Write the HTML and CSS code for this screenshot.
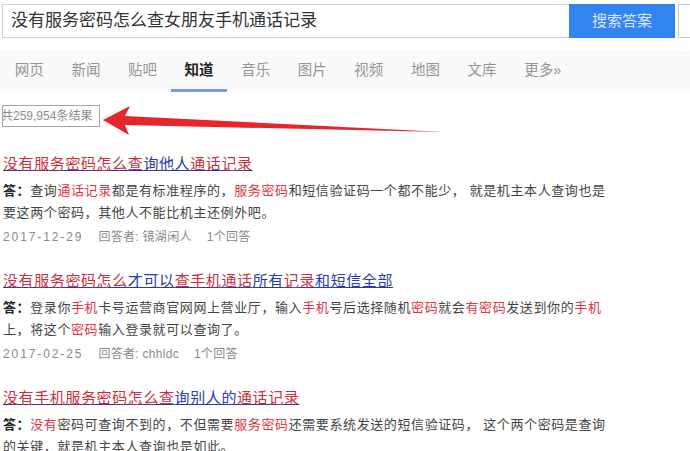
FILE: index.html
```html
<!DOCTYPE html>
<html lang="zh-CN">
<head>
  <meta charset="UTF-8">
  <meta name="viewport" content="width=device-width, initial-scale=1.0">
  <title>没有服务密码怎么查女朋友手机通话记录</title>
  <link rel="stylesheet" href="styles.css">
</head>
<body>
  <div class="search">
    <div class="search-input">没有服务密码怎么查女朋友手机通话记录</div>
    <div class="search-btn">搜索答案</div>
    <div class="search-extra"></div>
  </div>

  <div class="nav">
    <div class="nav-item">网页</div>
    <div class="nav-item">新闻</div>
    <div class="nav-item">贴吧</div>
    <div class="nav-item active">知道</div>
    <div class="nav-item">音乐</div>
    <div class="nav-item">图片</div>
    <div class="nav-item">视频</div>
    <div class="nav-item">地图</div>
    <div class="nav-item">文库</div>
    <div class="nav-item">更多»</div>
  </div>

  <div class="count-row">
    <span class="count">共259,954条结果</span>
    <!-- red annotation arrow pointing at the count -->
    <svg class="arrow" width="460" height="45" viewBox="0 0 460 45">
      <polygon points="103,24 130,10 125,20 443,36 125,29 129,39" fill="#e5262b"/>
    </svg>
  </div>

  <div class="results">
    <div class="result">
      <div class="title"><em>没有服务密码怎么查</em>询他人<em>通话记录</em></div>
      <div class="answer"><b>答：</b>查询<em>通话记录</em>都是有标准程序的，<em>服务密码</em>和短信验证码一个都不能少， 就是机主本人查询也是要这两个密码，其他人不能比机主还例外吧。</div>
      <div class="meta"><span class="date">2017-12-29</span><span>回答者: 镜湖闲人</span><span>1个回答</span></div>
    </div>

    <div class="result">
      <div class="title"><em>没有服务密码怎么</em>才可以<em>查手机通话</em>所有<em>记录</em>和短信全部</div>
      <div class="answer"><b>答：</b>登录你<em>手机</em>卡号运营商官网网上营业厅，输入<em>手机</em>号后选择随机<em>密码</em>就会<em>有密码</em>发送到你的<em>手机</em>上，将这个<em>密码</em>输入登录就可以查询了。</div>
      <div class="meta"><span class="date">2017-02-25</span><span>回答者: chhldc</span><span>1个回答</span></div>
    </div>

    <div class="result">
      <div class="title"><em>没有手机服务密码怎么查</em>询别人的<em>通话记录</em></div>
      <div class="answer"><b>答：</b><em>没有</em>密码可查询不到的，不但需要<em>服务密码</em>还需要系统发送的短信验证码， 这个两个密码是查询的关键，就是机主本人查询也是如此。</div>
    </div>
  </div>
</body>
</html>
```

FILE: styles.css
```css
body {
  margin: 0;
  background: #fff;
  font-family: "Liberation Sans", "Noto Sans CJK SC", sans-serif;
  color: #333;
  width: 690px;
  height: 451px;
  overflow: hidden;
}

.search {
  display: flex;
  padding-top: 4px;
  padding-left: 2px;
  height: 34px;
}

.search-input {
  box-sizing: border-box;
  width: 567px;
  height: 34px;
  border: 1px solid #cfcfcf;
  border-right: none;
  padding-left: 8px;
  font-size: 17px;
  line-height: 32px;
  color: #333;
}

.search-btn {
  width: 106px;
  height: 34px;
  background: #3284f0;
  color: #dce8fb;
  font-size: 15px;
  line-height: 34px;
  text-align: center;
}

.search-extra {
  box-sizing: border-box;
  margin-left: 3px;
  flex: 1;
  height: 34px;
  border: 1px solid #c8c8c8;
  border-right: none;
}

.nav {
  display: flex;
  margin-top: 12px;
  padding-left: 1px;
  background: #fafafa;
}

.nav-item {
  padding: 10px 13.8px 9px;
  font-size: 14.5px;
  line-height: 20px;
  color: #949494;
  border-bottom: 3px solid transparent;
}

.nav-item.active {
  color: #222;
  font-weight: bold;
  border-bottom-color: #6f9fdc;
}

.count-row {
  position: relative;
  margin-top: 13px;
  padding-left: 2px;
  height: 22px;
}

.count {
  display: inline-block;
  box-sizing: border-box;
  height: 22px;
  width: 98px;
  border: 1px solid #a9a2aa;
  font-size: 12px;
  line-height: 20px;
  color: #8d8d8d;
  white-space: nowrap;
  overflow: hidden;
  text-indent: -2px;
}

.arrow {
  position: absolute;
  left: 0;
  top: -9px;
}

.results {
  margin-top: 26px;
  padding-left: 3px;
  width: 606px;
}

.result {
  margin-bottom: 22px;
}

.title {
  font-size: 15px;
  letter-spacing: 0.6px;
  line-height: 22px;
  color: #2b3aa8;
  text-decoration: underline;
  margin-bottom: 5px;
}

.title em {
  font-style: normal;
  color: #c9303c;
}

.answer {
  font-size: 13px;
  letter-spacing: 0.6px;
  line-height: 22px;
  color: #444;
}

.answer b {
  color: #222;
}

.answer em {
  font-style: normal;
  color: #df3340;
}

.meta {
  margin-top: 2px;
  font-size: 12px;
  line-height: 22px;
  color: #8a8a8a;
  letter-spacing: 0.3px;
}

.meta span {
  margin-right: 15px;
}

.meta .date {
  letter-spacing: 1.9px;
}
```
